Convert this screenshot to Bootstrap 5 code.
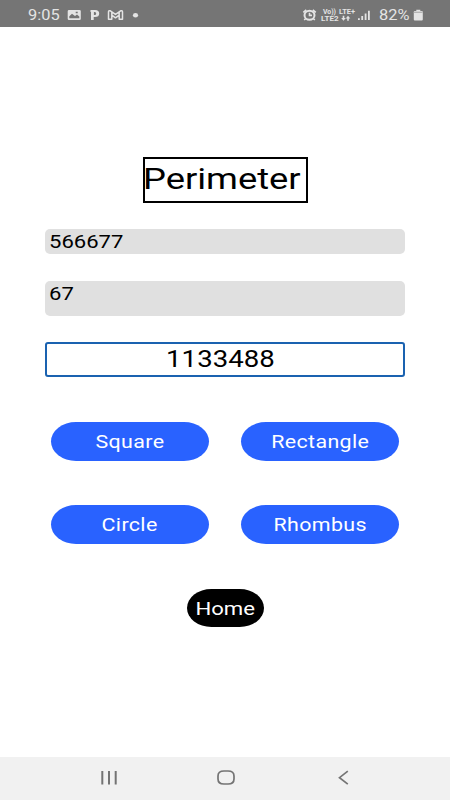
<!DOCTYPE html>
<html lang="en">
<head>
<meta charset="utf-8">
<meta name="viewport" content="width=device-width, initial-scale=1">
<title>Perimeter</title>
<link href="https://cdn.jsdelivr.net/npm/bootstrap@5.3.0/dist/css/bootstrap.min.css" rel="stylesheet">
<style>
body{font-family:Roboto,"Liberation Sans",sans-serif;color:#000;height:800px;overflow:hidden}
.status{height:27px;background:#757575;color:#e4e4e4;padding:2px 26px 0 28px}
.status svg{display:block}
.wide{display:inline-block;white-space:nowrap;transform:scaleX(var(--s,1.25));transform-origin:center}
.from-left{transform-origin:left center}
.clock{font-size:14px;line-height:24px;--s:1.17;width:39px}
.pct-slot{width:40px;padding-left:6px}
.pct{font-size:14px;line-height:24px;--s:1.17}
.title-box{width:165px;height:46px;margin-top:130px;border:2px solid #000;font-size:29.3px;line-height:40px;font-weight:400}
.title-box .wide{--s:1.24;margin-left:-2px}
.field{width:360px;background:#e0e0e0;border-radius:5px;padding-left:4.300px;font-size:17.800px;line-height:26px}
.field .wide{--s:1.24}
.f-one{height:25px;margin-top:26px}
.f-two{height:35px;margin-top:27px}
.result{width:360px;height:35px;margin-top:26px;border:2px solid #1a62b0;border-radius:3px;padding-right:10px;font-size:23.6px;line-height:30px}
.result .wide{--s:1.17}
.shapes{width:348px;margin-top:45px;display:grid;grid-template-columns:158px 158px;column-gap:32px;row-gap:44px}
.pill{height:39px;border:0;border-radius:25px/19.5px;font-size:18px;line-height:40px;padding:0;color:#fff;letter-spacing:.3px}
.pill .wide{--s:1.19}
.pill-blue,.pill-blue:hover{background:#2962ff;color:#fff}
.pill-home,.pill-home:hover{width:77px;height:38px;margin-top:45px;background:#000;color:#fff;letter-spacing:0}
.pill-home .wide{--s:1.23}
.sysnav{height:43px;background:#f1f1f1}
</style>
<script src="https://cdn.jsdelivr.net/npm/bootstrap@5.3.0/dist/js/bootstrap.bundle.min.js" defer></script>
</head>
<body class="d-flex flex-column bg-white m-0">
<header class="status d-flex align-items-center justify-content-between">
  <div class="d-flex align-items-center">
    <span class="wide from-left clock">9:05</span>
    <svg width="74" height="24" viewBox="67 2 74 24" fill="#e4e4e4">
      <path fill-rule="evenodd" d="M69 9h10.500q1.300 0 1.300 1.200v7.600q0 1.200-1.300 1.200H69q-1.300 0-1.300-1.200v-7.600Q67.700 9 69 9ZM69.300 17.300h10v-1.800l-2.300-2-2 1.600-3-2.400-2.700 2.600ZM75.700 12.200h2v-1.500h-2Z"/>
      <path fill-rule="evenodd" d="M90.500 9h4.500q4.200 0 4.200 3.500t-4.200 3.500h-1.300V19h-2.700v-8h-.5ZM93.900 11v3h.9q1.400 0 1.400-1.500t-1.400-1.500Z"/>
      <path fill="none" stroke="#e4e4e4" stroke-width="1.500" stroke-linejoin="round" d="M108.500 18.300v-7.400q0-1.500 1.500-1.200l5.500 3.700 5.500-3.700q1.500-.3 1.500 1.200v7.400h-3.300v-4.200l-3.700 2.700-3.700-2.700v4.200ZM111.800 14v-2.800M119.200 14v-2.800"/>
      <ellipse cx="135.500" cy="14.200" rx="2.600" ry="2.200"/>
    </svg>
  </div>
  <div class="d-flex align-items-center">
    <svg width="72" height="24" viewBox="301 2 72 24" fill="#e4e4e4">
      <ellipse cx="309.500" cy="14.200" rx="5" ry="4.500" fill="none" stroke="#e4e4e4" stroke-width="2"/>
      <path fill="none" stroke="#e4e4e4" stroke-width="1.600" d="M303.300 11.400l3-2.600M312.800 8.800l3 2.600M309.500 11.700v2.700h2.500M305.700 17.500l-1.500 1.500M313.300 17.500l1.500 1.500"/>
      <g font-family="Roboto,sans-serif" font-weight="700" font-size="6.800">
        <text x="323" y="13.300" textLength="13" lengthAdjust="spacingAndGlyphs">Vo))</text>
        <text x="339" y="13.300" textLength="16" lengthAdjust="spacingAndGlyphs">LTE+</text>
        <text x="321" y="20" textLength="17.500" lengthAdjust="spacingAndGlyphs">LTE2</text>
      </g>
      <path d="M342.700 14.800h1.600v2.300h1.500l-2.300 2.600-2.300-2.600h1.500ZM347.200 19.700h1.600v-2.300h1.500l-2.300-2.600-2.300 2.600h1.500Z"/>
      <path d="M358 17.200h1.800V19H358ZM361.300 15h1.800v4h-1.800ZM364.700 12.400h1.800V19h-1.800ZM368 9.800h1.800V19H368Z"/>
    </svg>
    <span class="pct-slot"><span class="wide from-left pct">82%</span></span>
    <svg width="11" height="24" viewBox="413 2 11 24"><path fill="#e4e4e4" d="M416.300 8.800h4v1.300h1.500q1 0 1 1v7.500q0 1-1 1h-7q-1 0-1-1v-7.500q0-1 1-1h1.500Z"/><path fill="#b5b5b5" d="M413.800 10.600h9v1.400h-9Z"/></svg>
  </div>
</header>
<main class="flex-grow-1 d-flex flex-column align-items-center">
  <h1 class="title-box mb-0"><span class="wide from-left">Perimeter</span></h1>
  <div class="field f-one"><span class="wide from-left">566677</span></div>
  <div class="field f-two"><span class="wide from-left">67</span></div>
  <div class="result text-center"><span class="wide">1133488</span></div>
  <div class="shapes justify-content-center">
    <button class="btn pill pill-blue"><span class="wide">Square</span></button>
    <button class="btn pill pill-blue"><span class="wide">Rectangle</span></button>
    <button class="btn pill pill-blue"><span class="wide">Circle</span></button>
    <button class="btn pill pill-blue"><span class="wide">Rhombus</span></button>
  </div>
  <button class="btn pill pill-home"><span class="wide">Home</span></button>
</main>
<nav class="sysnav">
  <svg class="d-block" width="450" height="43" viewBox="0 757 450 43" fill="none" stroke="#747474" stroke-width="1.700">
    <path stroke-width="2" d="M102.300 771v13.500M109 771v13.500M115.700 771v13.500"/>
    <path d="M224 771h4q6 0 6 5v3q0 5-6 5h-4q-6 0-6-5v-3q0-5 6-5Z"/>
    <path d="M347.800 771.200l-8.300 6.500 8.300 6.500"/>
  </svg>
</nav>
</body>
</html>
